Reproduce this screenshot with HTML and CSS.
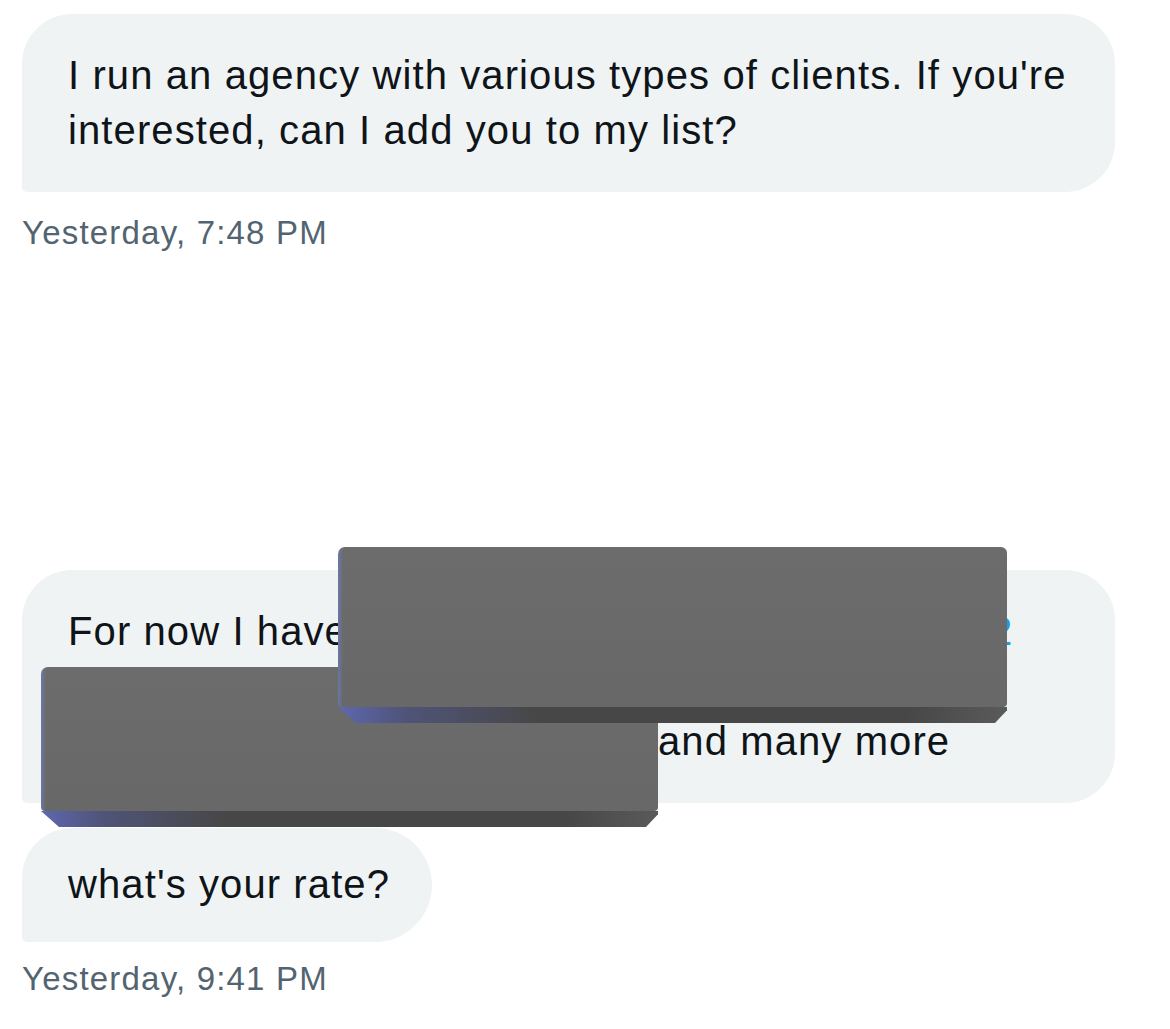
FILE: index.html
```html
<!DOCTYPE html>
<html lang="en">
<head>
<meta charset="utf-8">
<title>Messages</title>
<link rel="stylesheet" href="styles.css">
</head>
<body>
<main class="thread">
  <div class="bubble bubble-first">I run an agency with various types of clients. If you're<br>interested, can I add you to my list?</div>
  <div class="stamp">Yesterday, 7:48 PM</div>

  <div class="bubble bubble-second">For now I have<span class="gap gap-a"></span><span class="mention">2</span><br>&nbsp;<br><span class="gap gap-b"></span>and many more</div>
  <div class="bubble bubble-third">what's your rate?</div>
  <div class="stamp">Yesterday, 9:41 PM</div>

  <div class="redact redact-two"></div>
  <div class="redact redact-one"></div>
</main>
</body>
</html>
```

FILE: styles.css
```css
html, body {
  margin: 0;
  padding: 0;
  background: #ffffff;
}

.thread {
  position: relative;
  width: 1170px;
  height: 1029px;
  padding: 14px 0 0 22px;
  box-sizing: border-box;
  overflow: hidden;
  font-family: "Liberation Sans", Arial, sans-serif;
}

.bubble {
  background: #eff3f4;
  color: #0f1419;
  font-size: 40px;
  letter-spacing: 1.1px;
  line-height: 55px;
  white-space: nowrap;
  box-sizing: border-box;
  padding: 34px 46px;
  border-radius: 50px 50px 50px 5px;
}

.bubble-first {
  width: 1093px;
}

.bubble-second {
  width: 1093px;
  margin-top: 320px;
}

.bubble-third {
  width: 410px;
  margin-top: 25px;
  padding-top: 29px;
  padding-bottom: 30px;
  border-radius: 50px 57px 57px 5px;
}

.gap {
  display: inline-block;
  height: 1px;
}

.gap-a {
  width: 642px;
}

.gap-b {
  width: 590px;
}

.mention {
  color: #1d9bf0;
}

.stamp {
  color: #536471;
  font-size: 33px;
  letter-spacing: 1.2px;
  line-height: 34px;
  margin-top: 24px;
}

.bubble-third + .stamp {
  margin-top: 20px;
}

.redact {
  position: absolute;
  border-radius: 7px 6px 4px 4px;
  background:
    linear-gradient(90deg, rgba(110, 130, 220, 0.55) 0, rgba(110, 130, 220, 0) 5px),
    linear-gradient(180deg, #6c6c6c 0, #686868 100%);
}

.redact::after {
  content: "";
  position: absolute;
  left: 0;
  right: 0;
  top: 100%;
  height: 16px;
  background: linear-gradient(90deg, #5d68b0 0, #4f5478 10%, #474747 30%, #474747 85%, #5a5a5a 100%);
  clip-path: polygon(0 0, 100% 0, 100% 20%, calc(100% - 12px) 100%, 18px 100%);
}

.redact-one {
  left: 338px;
  top: 547px;
  width: 669px;
  height: 160px;
}

.redact-two {
  left: 41px;
  top: 667px;
  width: 617px;
  height: 144px;
}
```
